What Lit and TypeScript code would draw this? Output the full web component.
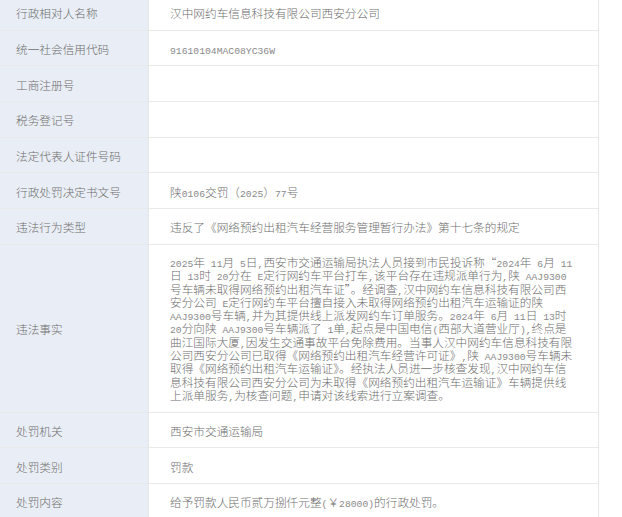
import { LitElement, html, css } from "lit";
import { customElement } from "lit/decorators.js";

const latin = (t: string) =>
  t.split(/([A-Za-z0-9 ,()]+)/).map((p, i) => (i % 2 ? html`<span class="m">${p}</span>` : p));

const body = [
  "2025年 11月 5日,西安市交通运输局执法人员接到市民投诉称“2024年 6月 11",
  "日 13时 20分在 E定行网约车平台打车,该平台存在违规派单行为,陕 AAJ9300",
  "号车辆未取得网络预约出租汽车证”。经调查,汉中网约车信息科技有限公司西",
  "安分公司 E定行网约车平台擅自接入未取得网络预约出租汽车运输证的陕",
  "AAJ9300号车辆,并为其提供线上派发网约车订单服务。2024年 6月 11日 13时",
  "20分向陕 AAJ9300号车辆派了 1单,起点是中国电信(西部大道营业厅),终点是",
  "曲江国际大厦,因发生交通事故平台免除费用。当事人汉中网约车信息科技有限",
  "公司西安分公司已取得《网络预约出租汽车经营许可证》,陕 AAJ9300号车辆未",
  "取得《网络预约出租汽车运输证》。经执法人员进一步核查发现,汉中网约车信",
  "息科技有限公司西安分公司为未取得《网络预约出租汽车运输证》车辆提供线",
  "上派单服务,为核查问题,申请对该线索进行立案调查。",
];

const rows: [string, string][] = [
  ["行政相对人名称", "汉中网约车信息科技有限公司西安分公司"],
  ["统一社会信用代码", "91610104MAC08YC36W"],
  ["工商注册号", ""],
  ["税务登记号", ""],
  ["法定代表人证件号码", ""],
  ["行政处罚决定书文号", "陕0106交罚（2025）77号"],
  ["违法行为类型", "违反了《网络预约出租汽车经营服务管理暂行办法》第十七条的规定"],
];
const tail: [string, string][] = [
  ["处罚机关", "西安市交通运输局"],
  ["处罚类别", "罚款"],
  ["处罚内容", "给予罚款人民币贰万捌仟元整(￥28000)的行政处罚。"],
];

@customElement("app-root")
export class AppRoot extends LitElement {
  static styles = css`
    :host { display: block; height: 517px; overflow: hidden; background: #fff; }
    .table {
      width: 599px; margin-top: -5px; box-sizing: border-box;
      border-right: 1px solid #e6e6e6;
      font-family: "Noto Sans CJK SC", "Liberation Serif", serif;
      font-size: 11.67px; color: #6e6e6e; font-weight: 300;
    }
    .row { display: grid; grid-template-columns: 149px 1fr; border-bottom: 1px solid #e9e9e9; }
    .k { background: #e9edf5; padding: 1px 0 0 16px; box-sizing: border-box; height: 34.67px; display: flex; align-items: center; border-right: 1px solid #e6e6e6; }
    .v { padding: 1px 0 0 21px; display: flex; align-items: center; }
    .big .k { height: 167px; }
    .big .v { padding-top: 0; }
    .line { height: 13.3px; line-height: 13.3px; white-space: pre; }
    .m { font-family: "Liberation Mono", monospace; font-size: 9.72px; color: #8a8a8a; font-weight: 400; }
  `;
  private row([k, v]: [string, string]) {
    return html`<div class="row"><div class="k">${k}</div><div class="v"><span>${latin(v)}</span></div></div>`;
  }
  render() {
    return html`<div class="table">
      ${rows.map((r) => this.row(r))}
      <div class="row big">
        <div class="k">违法事实</div>
        <div class="v"><div>${body.map((l) => html`<div class="line">${latin(l)}</div>`)}</div></div>
      </div>
      ${tail.map((r) => this.row(r))}
    </div>`;
  }
}
